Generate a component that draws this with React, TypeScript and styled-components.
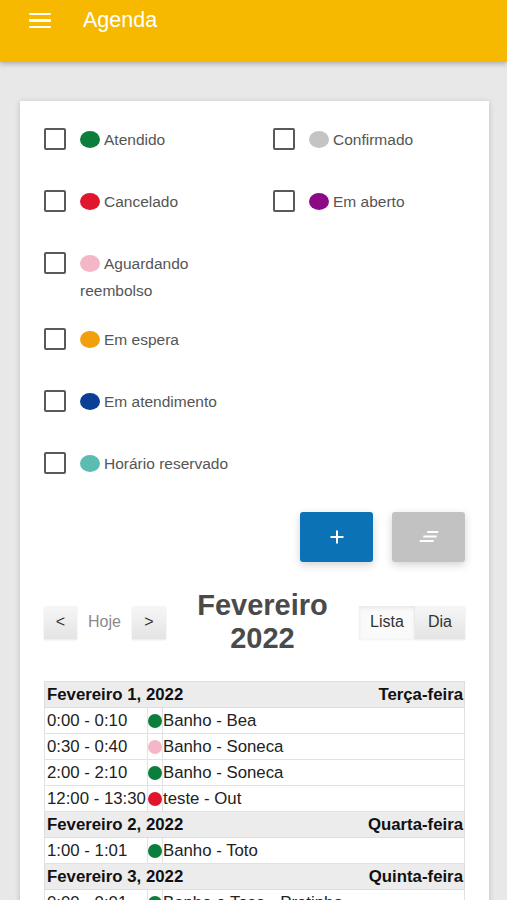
import React from "react"
import styled, { createGlobalStyle } from "styled-components"

const GlobalStyle = createGlobalStyle`
body {
    margin: 0;
    background: #e8e8e8;
    font-family: "Liberation Sans", Arial, sans-serif;
}
`

const TopBar = styled.header`
height: 62px;
background: #f6b900;
box-shadow: 0 2px 5px rgba(0, 0, 0, 0.25);
position: relative;
z-index: 1;
`

const TopBarRow = styled.div`
height: 41px;
display: flex;
align-items: center;
padding-left: 29px;
gap: 32px;
`

const MenuButton = styled.div`
width: 22px;
display: flex;
flex-direction: column;
gap: 4px;
span {
    display: block;
    height: 2.5px;
    background: #fff;
    border-radius: 1px;
}
`

const TopTitle = styled.div`
color: #fff;
font-size: 21.5px;
`

const Page = styled.main`
padding: 39px 18px 0 20px;
`

const Card = styled.section`
background: #fff;
box-shadow: 0 1px 6px rgba(0, 0, 0, 0.18);
padding: 24.5px 24px 40px 24px;
`

const Legend = styled.div`
display: grid;
grid-template-columns: 229px 1fr;
row-gap: 22px;
`

const LegendItem = styled.label<{ $solo?: boolean }>`
display: flex;
align-items: flex-start;
gap: 14px;
min-height: 40px;
${(p) => (p.$solo ? "grid-column: 1;" : "")}
`

const Check = styled.input`
appearance: none;
-webkit-appearance: none;
width: 22px;
height: 22px;
margin: 2.5px 0 0 0;
border: 2px solid #595959;
border-radius: 2px;
background: #fff;
flex-shrink: 0;
`

const LegendText = styled.span`
font-size: 15.5px;
line-height: 27px;
color: #555;
max-width: 172px;
`

const Dot = styled.span<{ $color: string }>`
display: inline-block;
width: 20px;
height: 17px;
border-radius: 50%;
background: ${(p) => p.$color};
vertical-align: -3px;
margin-right: 4px;
`

const ActionRow = styled.div`
display: flex;
justify-content: flex-end;
gap: 19px;
margin-top: 22.5px;
`

const ActionButton = styled.button<{ $tone: "primary" | "muted" }>`
width: 73px;
height: 50px;
border: none;
border-radius: 3px;
display: flex;
align-items: center;
justify-content: center;
background: ${(p) => (p.$tone === "primary" ? "#0b72b6" : "#c2c2c2")};
box-shadow: 0 3px 8px rgba(0, 0, 0, 0.18);
padding: 0;
`

const Toolbar = styled.div`
display: flex;
align-items: center;
margin-top: 27px;
`

const ButtonGroup = styled.div`
display: flex;
align-items: center;
`

const CalButton = styled.button<{ $w: number; $active?: boolean; $plain?: boolean }>`
height: 33px;
width: ${(p) => p.$w}px;
padding: 0;
border: none;
font-family: inherit;
font-size: 16px;
color: ${(p) => (p.$plain ? "#8a8a8a" : "#333")};
background: ${(p) =>
    p.$plain
        ? "transparent"
        : p.$active
        ? "#fafafa"
        : "linear-gradient(#f6f6f6, #e4e4e4)"};
box-shadow: ${(p) =>
    p.$plain
        ? "none"
        : p.$active
        ? "inset 0 2px 4px rgba(0,0,0,0.08), 0 1px 2px rgba(0,0,0,0.06)"
        : "0 1px 2px rgba(0,0,0,0.1)"};
`

const MonthTitle = styled.h2`
flex: 1;
margin: 0;
text-align: center;
font-size: 29px;
line-height: 33px;
font-weight: bold;
color: #4a4a4a;
padding: 0 20px;
`

const ListTable = styled.table`
width: 100%;
margin-top: 26px;
border-collapse: collapse;
font-size: 16.8px;
`

const HeadingCell = styled.td`
background: #ececec;
border: 1px solid #dedede;
padding: 0 1px 0 2px;
height: 25px;
font-weight: bold;
color: #111;
`

const HeadingInner = styled.div`
display: flex;
justify-content: space-between;
white-space: nowrap;
`

const Cell = styled.td<{ $kind: "time" | "dot" | "title" }>`
border: 1px solid #e2e2e2;
height: 25px;
padding: ${(p) => (p.$kind === "time" ? "0 0 0 2px" : "0")};
width: ${(p) => (p.$kind === "time" ? "100px" : p.$kind === "dot" ? "14px" : "auto")};
color: #222;
white-space: nowrap;
vertical-align: middle;
`

const EventDot = styled.span<{ $color: string }>`
display: block;
width: 14px;
height: 14px;
border-radius: 50%;
margin: 0 auto;
background: ${(p) => p.$color};
`

const statuses = [
    { label: "Atendido", color: "#0b7d3c" },
    { label: "Confirmado", color: "#c4c4c4" },
    { label: "Cancelado", color: "#e0162e" },
    { label: "Em aberto", color: "#8c0a86" },
    { label: "Aguardando reembolso", color: "#f3b7c7", solo: true },
    { label: "Em espera", color: "#f29f0d", solo: true },
    { label: "Em atendimento", color: "#0c3e96", solo: true },
    { label: "Horário reservado", color: "#5dbcb1", solo: true },
]

const green = "#0b7d3c"

const days = [
    {
        date: "Fevereiro 1, 2022",
        weekday: "Terça-feira",
        events: [
            { time: "0:00 - 0:10", color: green, title: "Banho - Bea" },
            { time: "0:30 - 0:40", color: "#f3b7c7", title: "Banho - Soneca" },
            { time: "2:00 - 2:10", color: green, title: "Banho - Soneca" },
            { time: "12:00 - 13:30", color: "#e0162e", title: "teste - Out" },
        ],
    },
    {
        date: "Fevereiro 2, 2022",
        weekday: "Quarta-feira",
        events: [{ time: "1:00 - 1:01", color: green, title: "Banho - Toto" }],
    },
    {
        date: "Fevereiro 3, 2022",
        weekday: "Quinta-feira",
        events: [
            { time: "0:00 - 0:01", color: green, title: "Banho e Tosa - Pretinho" },
            { time: "1:00 - 1:10", color: green, title: "Banho - Bea" },
        ],
    },
]

const PlusIcon = () => (
    <svg width="16" height="16" viewBox="0 0 16 16">
        <path d="M8 1.5v13M1.5 8h13" stroke="#fff" strokeWidth="2" />
    </svg>
)

const NotesIcon = () => (
    <svg width="20" height="12" viewBox="0 0 20 12">
        <polygon points="8.5,0 19.5,0 19,2 8,2" fill="#fff" />
        <polygon points="4.5,4.5 18,4.5 17.5,6.5 4,6.5" fill="#fff" />
        <polygon points="1,9 15,9 14.5,11 0.5,11" fill="#fff" />
    </svg>
)

export default function App() {
    return (
        <>
            <GlobalStyle />
            <TopBar>
                <TopBarRow>
                    <MenuButton>
                        <span />
                        <span />
                        <span />
                    </MenuButton>
                    <TopTitle>Agenda</TopTitle>
                </TopBarRow>
            </TopBar>
            <Page>
                <Card>
                    <Legend>
                        {statuses.map((s) => (
                            <LegendItem key={s.label} $solo={s.solo}>
                                <Check type="checkbox" />
                                <LegendText>
                                    <Dot $color={s.color} />
                                    {s.label}
                                </LegendText>
                            </LegendItem>
                        ))}
                    </Legend>
                    <ActionRow>
                        <ActionButton $tone="primary">
                            <PlusIcon />
                        </ActionButton>
                        <ActionButton $tone="muted">
                            <NotesIcon />
                        </ActionButton>
                    </ActionRow>
                    <Toolbar>
                        <ButtonGroup>
                            <CalButton $w={33}>&lt;</CalButton>
                            <CalButton $w={55} $plain>Hoje</CalButton>
                            <CalButton $w={34}>&gt;</CalButton>
                        </ButtonGroup>
                        <MonthTitle>Fevereiro 2022</MonthTitle>
                        <ButtonGroup>
                            <CalButton $w={56} $active>Lista</CalButton>
                            <CalButton $w={50}>Dia</CalButton>
                        </ButtonGroup>
                    </Toolbar>
                    <ListTable>
                        <tbody>
                            {days.map((d) => (
                                <React.Fragment key={d.date}>
                                    <tr>
                                        <HeadingCell colSpan={3}>
                                            <HeadingInner>
                                                <span>{d.date}</span>
                                                <span>{d.weekday}</span>
                                            </HeadingInner>
                                        </HeadingCell>
                                    </tr>
                                    {d.events.map((e, i) => (
                                        <tr key={i}>
                                            <Cell $kind="time">{e.time}</Cell>
                                            <Cell $kind="dot">
                                                <EventDot $color={e.color} />
                                            </Cell>
                                            <Cell $kind="title">{e.title}</Cell>
                                        </tr>
                                    ))}
                                </React.Fragment>
                            ))}
                        </tbody>
                    </ListTable>
                </Card>
            </Page>
        </>
    )
}
